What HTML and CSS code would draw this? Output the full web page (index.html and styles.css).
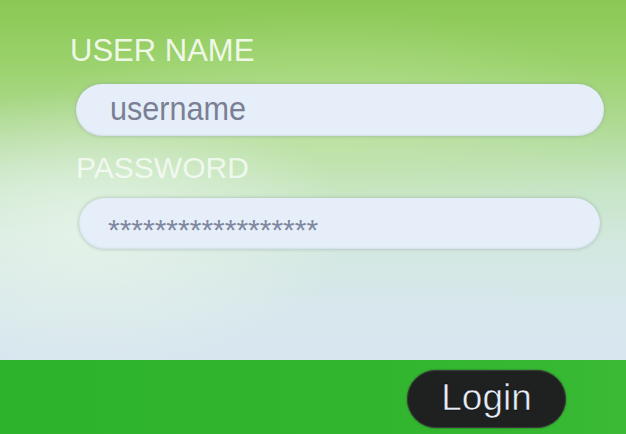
FILE: index.html
```html
<!DOCTYPE html>
<html lang="en">
<head>
<meta charset="utf-8">
<title>Login</title>
<link rel="stylesheet" href="styles.css">
</head>
<body>
<div class="screen">
  <form class="login-form">
    <label class="field-label label-user" for="user">USER NAME</label>
    <div class="field field-user" id="user">
      <span class="placeholder">username</span>
    </div>
    <label class="field-label label-pass" for="pass">PASSWORD</label>
    <div class="field field-pass" id="pass">
      <span class="dots">******************</span>
    </div>
  </form>
  <div class="action-bar">
    <button class="login-btn" type="button">Login</button>
  </div>
</div>
</body>
</html>
```

FILE: styles.css
```css
html, body {
  margin: 0;
  padding: 0;
}

body {
  width: 626px;
  height: 434px;
  overflow: hidden;
  font-family: "Liberation Sans", Arial, sans-serif;
}

.screen {
  display: flex;
  flex-direction: column;
  height: 434px;
}

.login-form {
  height: 360px;
  display: flex;
  flex-direction: column;
  align-items: flex-start;
  padding-top: 34px;
  box-sizing: border-box;
  background:
    radial-gradient(ellipse 260px 140px at 90px 230px, rgba(235, 246, 236, 0.75), rgba(235, 246, 236, 0) 100%),
    radial-gradient(ellipse 300px 120px at 330px 130px, rgba(200, 232, 170, 0.45), rgba(200, 232, 170, 0) 100%),
    linear-gradient(to bottom, #8ac854 0%, #9bd26c 18%, #afda94 35%, #c6e5c5 52%, #d3e8e0 68%, #d7e7ec 85%, #d8e6ef 100%);
}

.field-label {
  display: block;
  font-size: 31px;
  line-height: 34px;
  color: rgba(248, 252, 244, 0.92);
}

.label-user {
  margin-left: 70px;
}

.label-pass {
  margin-left: 76px;
  margin-top: 15px;
  font-size: 30px;
  color: rgba(250, 253, 250, 0.78);
}

.field {
  box-sizing: border-box;
  display: flex;
  align-items: center;
  border-radius: 27px;
  background: #e6eff9;
  box-shadow:
    0 0 3px 1px rgba(140, 165, 150, 0.4),
    inset 0 -1px 2px rgba(150, 170, 170, 0.25);
}

.field-user {
  margin-top: 16px;
  margin-left: 76px;
  width: 528px;
  height: 52px;
  padding-left: 34px;
}

.field-pass {
  margin-top: 13px;
  margin-left: 79px;
  width: 521px;
  height: 51px;
  padding-left: 29px;
}

/* placeholder face is a touch narrower than the labels */
.placeholder {
  display: inline-block;
  font-size: 34px;
  color: #7a7f94;
  margin-top: -4px;
  transform: scaleX(0.9);
  transform-origin: left center;
}

.dots {
  font-size: 30px;
  color: #8088a0;
  margin-top: 12px;
}

.action-bar {
  flex: 1;
  display: flex;
  justify-content: flex-end;
  align-items: flex-start;
  padding-top: 10px;
  padding-right: 60px;
  background: linear-gradient(to right, #2eb32d 0%, #31b52f 60%, #3aba35 100%);
}

.login-btn {
  width: 159px;
  height: 58px;
  border: 1px solid #3a3a3a;
  border-radius: 29px;
  background: #1f2020;
  color: #e6edf8;
  font-family: "Liberation Sans", Arial, sans-serif;
  font-size: 37px;
  line-height: 1;
  padding: 0 0 4px 0;
  -webkit-text-stroke: 0.5px #0a0a0a;
  text-shadow: 0 0 1px #000;
  box-shadow: 0 0 2px rgba(0, 0, 0, 0.5);
}
```
